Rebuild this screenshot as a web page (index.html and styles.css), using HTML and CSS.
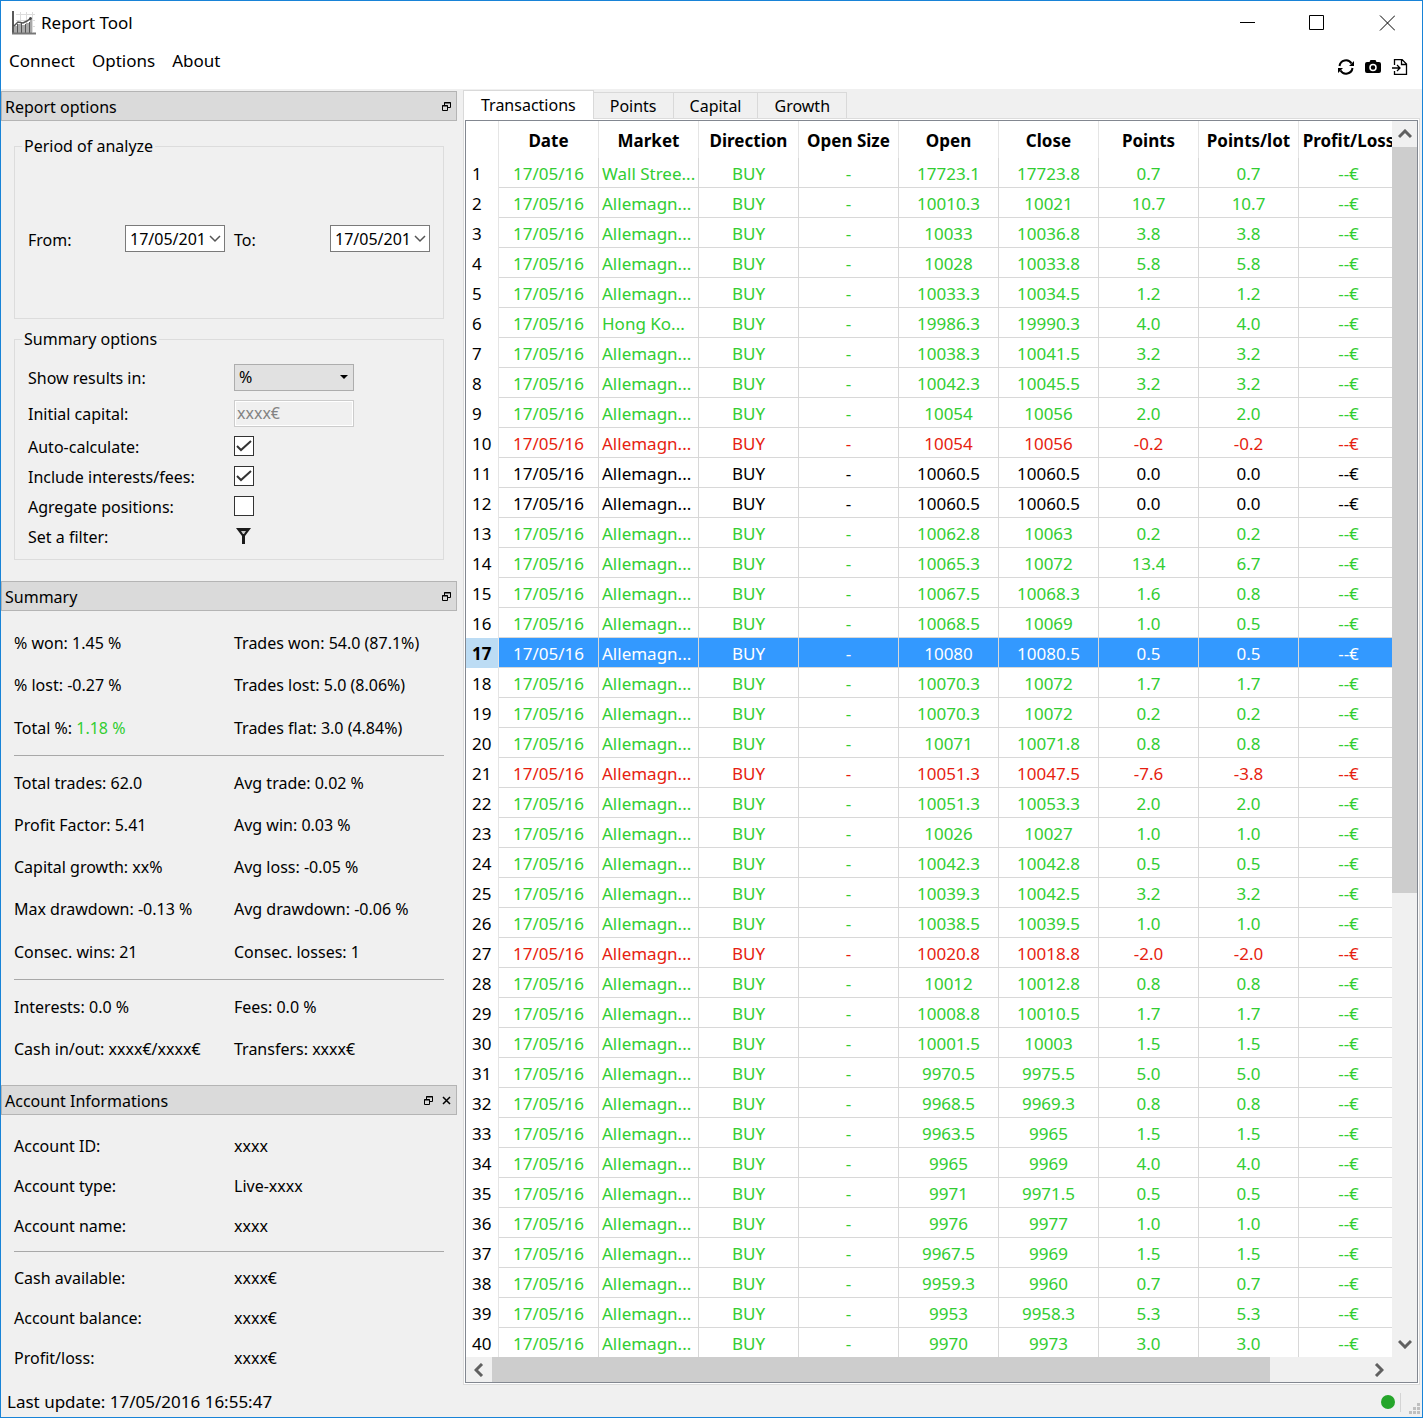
FILE: index.html
```html
<!DOCTYPE html>
<html lang="en">

<head>
    <meta charset="UTF-8">
    <meta name="viewport" content="width=device-width, initial-scale=1.0">
    <title>Report Tool</title>
    <link rel="stylesheet" href="styles.css">
</head>

<body>
    <header>
        <div class="title-bar">
            <svg class="app-icon" width="24" height="24" viewBox="0 0 24 24">
                <path d="M4 3.5h19M4 9.5h19M4 15.5h19M8.500 1v20M14.500 1v20M20.500 1v20" stroke="#dcdcdc" fill="none" />
                <path d="M2 22V15h3v7zM6 22v-9h3v9zM10 22v-8h3v8zM14 22V12h3v10zM18 22V9h2v13z" fill="#aaa" />
                <path d="M5.500 22v-9M9.500 22V12M13.500 22V13M17.500 22V11" stroke="#555" fill="none" />
                <path d="M2 15l4-4 5 1 4-2 4-3" stroke="#555" stroke-width="1.500" fill="none" />
                <circle cx="18.500" cy="7.500" r="1.500" fill="#444" />
                <path d="M1 0v23" stroke="#222" stroke-width="1.500" />
                <path d="M0 22.500h24" stroke="#777" stroke-width="2" />
            </svg>
            <h1>Report Tool</h1>
            <div class="window-buttons">
                <button type="button" aria-label="Minimize">
                    <svg width="16" height="16" viewBox="0 0 16 16"><path d="M1 7.500h15" /></svg>
                </button>
                <button type="button" aria-label="Maximize">
                    <svg width="16" height="16" viewBox="0 0 16 16"><path d="M.5.5h14v14H.5z" /></svg>
                </button>
                <button type="button" aria-label="Close">
                    <svg width="16" height="16" viewBox="0 0 16 16"><path d="M1 .5l15 15M16 .5L1 15.500" /></svg>
                </button>
            </div>
        </div>
        <div class="menu-bar">
            <nav>
                <button type="button">Connect</button>
                <button type="button">Options</button>
                <button type="button">About</button>
            </nav>
            <div class="toolbar">
                <button type="button" aria-label="Refresh">
                    <svg width="16" height="16" viewBox="0 0 16 16">
                        <path d="M1.500 7A6.500 6.500 0 0 1 13.500 4.500M14.500 9A6.500 6.500 0 0 1 2.500 11.500" stroke="#000" stroke-width="2" fill="none" />
                        <path d="M16 2v5h-5zM0 14V9h5z" />
                    </svg>
                </button>
                <button type="button" aria-label="Screenshot">
                    <svg width="16" height="16" viewBox="0 0 16 16">
                        <path d="M2 3h2.500l1-2h5l1 2H14a2 2 0 0 1 2 2v7a2 2 0 0 1-2 2H2a2 2 0 0 1-2-2V5a2 2 0 0 1 2-2z" />
                        <circle cx="8" cy="8.500" r="3" fill="none" stroke="#fff" stroke-width="1.500" />
                    </svg>
                </button>
                <button type="button" aria-label="Export">
                    <svg width="16" height="16" viewBox="0 0 16 16">
                        <path d="M2.500 6V.5H10l4.500 4.500v10.500h-12V12M9.500 1v4.500H14M0 9h7.500M5 6l3 3-3 3" stroke="#000" stroke-width="1.300" fill="none" />
                    </svg>
                </button>
            </div>
        </div>
    </header>

    <main>
        <aside>
            <section class="dock">
                <div class="dock-title">
                    <h2>Report options</h2>
                    <button type="button" aria-label="Float"><svg width="9" height="9" viewBox="0 0 9 9"><path d="M2.500 3V.5h6v5H6M2 1h7M.5 3.500h5v5h-5zM0 4h6" /></svg></button>
                </div>
                <div class="options">
                    <fieldset class="period">
                        <legend>Period of analyze</legend>
                        <label for="from">From:</label>
                        <div class="date-box">
                            <input type="text" id="from" value="17/05/201">
                            <button type="button" aria-label="Pick start date"><svg width="12" height="8" viewBox="0 0 12 8"><path d="M1 1l5 5 5-5" /></svg></button>
                        </div>
                        <label for="to">To:</label>
                        <div class="date-box">
                            <input type="text" id="to" value="17/05/201">
                            <button type="button" aria-label="Pick end date"><svg width="12" height="8" viewBox="0 0 12 8"><path d="M1 1l5 5 5-5" /></svg></button>
                        </div>
                    </fieldset>
                    <fieldset class="summary-options">
                        <legend>Summary options</legend>
                        <label for="unit">Show results in:</label>
                        <div class="select-box">
                            <select id="unit">
                                <option>%</option>
                            </select>
                            <svg width="8" height="4" viewBox="0 0 8 4"><path d="M0 0h8L4 4z" /></svg>
                        </div>
                        <label for="capital">Initial capital:</label>
                        <input type="text" id="capital" value="xxxx€" disabled>
                        <label for="auto">Auto-calculate:</label>
                        <span class="check"><input type="checkbox" id="auto" checked><svg width="16" height="12" viewBox="0 0 16 12"><path d="M1 6l4 4L15 1" /></svg></span>
                        <label for="fees">Include interests/fees:</label>
                        <span class="check"><input type="checkbox" id="fees" checked><svg width="16" height="12" viewBox="0 0 16 12"><path d="M1 6l4 4L15 1" /></svg></span>
                        <label for="agregate">Agregate positions:</label>
                        <span class="check"><input type="checkbox" id="agregate"></span>
                        <label for="filter">Set a filter:</label>
                        <button type="button" id="filter" aria-label="Set a filter">
                            <svg width="15" height="16" viewBox="0 0 15 16"><path d="M0 0h15L9 8v8H6V8z" fill="#1a1a1a" /><path d="M5 3h5L8 6H7z" fill="#ccc" /></svg>
                        </button>
                    </fieldset>
                </div>
            </section>

            <section class="dock grow">
                <div class="dock-title">
                    <h2>Summary</h2>
                    <button type="button" aria-label="Float"><svg width="9" height="9" viewBox="0 0 9 9"><path d="M2.500 3V.5h6v5H6M2 1h7M.5 3.500h5v5h-5zM0 4h6" /></svg></button>
                </div>
                <div class="summary">
                    <div class="row"><span>% won: 1.45 %</span><span>Trades won: 54.0 (87.1%)</span></div>
                    <div class="row"><span>% lost: -0.27 %</span><span>Trades lost: 5.0 (8.06%)</span></div>
                    <div class="row"><span>Total %: <span class="win">1.18 %</span></span><span>Trades flat: 3.0 (4.84%)</span></div>
                    <hr>
                    <div class="row"><span>Total trades: 62.0</span><span>Avg trade: 0.02 %</span></div>
                    <div class="row"><span>Profit Factor: 5.41</span><span>Avg win: 0.03 %</span></div>
                    <div class="row"><span>Capital growth: xx%</span><span>Avg loss: -0.05 %</span></div>
                    <div class="row"><span>Max drawdown: -0.13 %</span><span>Avg drawdown: -0.06 %</span></div>
                    <div class="row"><span>Consec. wins: 21</span><span>Consec. losses: 1</span></div>
                    <hr>
                    <div class="row"><span>Interests: 0.0 %</span><span>Fees: 0.0 %</span></div>
                    <div class="row"><span>Cash in/out: xxxx€/xxxx€</span><span>Transfers: xxxx€</span></div>
                </div>
            </section>

            <section class="dock">
                <div class="dock-title">
                    <h2>Account Informations</h2>
                    <button type="button" aria-label="Float"><svg width="9" height="9" viewBox="0 0 9 9"><path d="M2.500 3V.5h6v5H6M2 1h7M.5 3.500h5v5h-5zM0 4h6" /></svg></button>
                    <button type="button" aria-label="Close"><svg class="cross" width="9" height="9" viewBox="0 0 9 9"><path d="M1 1l7 7M8 1L1 8" /></svg></button>
                </div>
                <div class="account">
                    <div class="row"><span>Account ID:</span><span>xxxx</span></div>
                    <div class="row"><span>Account type:</span><span>Live-xxxx</span></div>
                    <div class="row"><span>Account name:</span><span>xxxx</span></div>
                    <hr>
                    <div class="row"><span>Cash available:</span><span>xxxx€</span></div>
                    <div class="row"><span>Account balance:</span><span>xxxx€</span></div>
                    <div class="row"><span>Profit/loss:</span><span>xxxx€</span></div>
                </div>
            </section>
        </aside>

        <section class="report">
            <div class="tabs" role="tablist">
                <button type="button" role="tab" class="active">Transactions</button>
                <button type="button" role="tab">Points</button>
                <button type="button" role="tab">Capital</button>
                <button type="button" role="tab">Growth</button>
            </div>
            <div class="pane">
                <div class="table-frame">
                    <div class="table-view">
                        <table>
                            <thead>
                                <tr>
                                    <th></th>
                                    <th>Date</th>
                                    <th>Market</th>
                                    <th>Direction</th>
                                    <th>Open Size</th>
                                    <th>Open</th>
                                    <th>Close</th>
                                    <th>Points</th>
                                    <th>Points/lot</th>
                                    <th>Profit/Loss</th>
                                </tr>
                            </thead>
                            <tbody id="transactions"></tbody>
                        </table>
                    </div>
                    <div class="scroll vertical">
                        <button type="button" aria-label="Scroll up"><svg width="14" height="10" viewBox="0 0 14 10"><path d="M1 8l6-6 6 6" /></svg></button>
                        <div class="track"><div class="thumb"></div></div>
                        <button type="button" aria-label="Scroll down"><svg width="14" height="10" viewBox="0 0 14 10"><path d="M1 2l6 6 6-6" /></svg></button>
                    </div>
                    <div class="scroll horizontal">
                        <button type="button" aria-label="Scroll left"><svg width="10" height="14" viewBox="0 0 10 14"><path d="M8 1L2 7l6 6" /></svg></button>
                        <div class="track"><div class="thumb"></div></div>
                        <button type="button" aria-label="Scroll right"><svg width="10" height="14" viewBox="0 0 10 14"><path d="M2 1l6 6-6 6" /></svg></button>
                    </div>
                </div>
            </div>
        </section>
    </main>

    <footer>
        <p>Last update: 17/05/2016 16:55:47</p>
        <span class="status-dot"></span>
        <span class="separator"></span>
        <svg width="11" height="11" viewBox="0 0 11 11">
            <path d="M8 0h3v3H8zM4 4h3v3H4zM8 4h3v3H8zM0 8h3v3H0zM4 8h3v3H4zM8 8h3v3H8z" fill="#bfbfbf" />
        </svg>
    </footer>

    <script>
        const selectedRow = 17;

        // market, open, close, points, points per lot
        const trades = [
            ["Wall Stree...", "17723.1", "17723.8", "0.7", "0.7"],
            ["Allemagn...", "10010.3", "10021", "10.7", "10.7"],
            ["Allemagn...", "10033", "10036.8", "3.8", "3.8"],
            ["Allemagn...", "10028", "10033.8", "5.8", "5.8"],
            ["Allemagn...", "10033.3", "10034.5", "1.2", "1.2"],
            ["Hong Ko...", "19986.3", "19990.3", "4.0", "4.0"],
            ["Allemagn...", "10038.3", "10041.5", "3.2", "3.2"],
            ["Allemagn...", "10042.3", "10045.5", "3.2", "3.2"],
            ["Allemagn...", "10054", "10056", "2.0", "2.0"],
            ["Allemagn...", "10054", "10056", "-0.2", "-0.2"],
            ["Allemagn...", "10060.5", "10060.5", "0.0", "0.0"],
            ["Allemagn...", "10060.5", "10060.5", "0.0", "0.0"],
            ["Allemagn...", "10062.8", "10063", "0.2", "0.2"],
            ["Allemagn...", "10065.3", "10072", "13.4", "6.7"],
            ["Allemagn...", "10067.5", "10068.3", "1.6", "0.8"],
            ["Allemagn...", "10068.5", "10069", "1.0", "0.5"],
            ["Allemagn...", "10080", "10080.5", "0.5", "0.5"],
            ["Allemagn...", "10070.3", "10072", "1.7", "1.7"],
            ["Allemagn...", "10070.3", "10072", "0.2", "0.2"],
            ["Allemagn...", "10071", "10071.8", "0.8", "0.8"],
            ["Allemagn...", "10051.3", "10047.5", "-7.6", "-3.8"],
            ["Allemagn...", "10051.3", "10053.3", "2.0", "2.0"],
            ["Allemagn...", "10026", "10027", "1.0", "1.0"],
            ["Allemagn...", "10042.3", "10042.8", "0.5", "0.5"],
            ["Allemagn...", "10039.3", "10042.5", "3.2", "3.2"],
            ["Allemagn...", "10038.5", "10039.5", "1.0", "1.0"],
            ["Allemagn...", "10020.8", "10018.8", "-2.0", "-2.0"],
            ["Allemagn...", "10012", "10012.8", "0.8", "0.8"],
            ["Allemagn...", "10008.8", "10010.5", "1.7", "1.7"],
            ["Allemagn...", "10001.5", "10003", "1.5", "1.5"],
            ["Allemagn...", "9970.5", "9975.5", "5.0", "5.0"],
            ["Allemagn...", "9968.5", "9969.3", "0.8", "0.8"],
            ["Allemagn...", "9963.5", "9965", "1.5", "1.5"],
            ["Allemagn...", "9965", "9969", "4.0", "4.0"],
            ["Allemagn...", "9971", "9971.5", "0.5", "0.5"],
            ["Allemagn...", "9976", "9977", "1.0", "1.0"],
            ["Allemagn...", "9967.5", "9969", "1.5", "1.5"],
            ["Allemagn...", "9959.3", "9960", "0.7", "0.7"],
            ["Allemagn...", "9953", "9958.3", "5.3", "5.3"],
            ["Allemagn...", "9970", "9973", "3.0", "3.0"]
        ];

        const tbody = document.getElementById("transactions");

        trades.forEach(function (trade, index) {
            const [market, open, close, points, perLot] = trade;
            const row = document.createElement("tr");

            if (index + 1 === selectedRow) {
                row.className = "selected";
            } else if (Number(points) > 0) {
                row.className = "win";
            } else if (Number(points) < 0) {
                row.className = "loss";
            }

            const head = document.createElement("th");
            head.innerText = index + 1;
            row.appendChild(head);

            ["17/05/16", market, "BUY", "-", open, close, points, perLot, "--€"].forEach(function (value) {
                const cell = document.createElement("td");
                cell.innerText = value;
                row.appendChild(cell);
            });
            row.children[2].className = "market";
            tbody.appendChild(row);
        });
    </script>
</body>

</html>
```
FILE: styles.css
```css
* {
    box-sizing: border-box;
}

body {
    margin: 0;
    height: 100vh;
    display: flex;
    flex-direction: column;
    border: 1px solid #1883d7;
    background-color: #f0f0f0;
    color: #000;
    font-family: "Noto Sans", "Open Sans", sans-serif;
    font-size: 16px;
    line-height: 20px;
    overflow: hidden;
}

button,
input,
select {
    font: inherit;
    color: inherit;
    margin: 0;
    padding: 0;
    border: none;
    border-radius: 0;
    background: none;
}

h1,
h2,
p {
    margin: 0;
    font-size: inherit;
    font-weight: normal;
}

svg {
    display: block;
}

/* title bar and menus */
header {
    background-color: #fff;
    font-size: 17px;
}

.title-bar {
    display: flex;
    align-items: center;
    height: 44px;
    padding-left: 11px;
    gap: 5px;
}

.window-buttons {
    display: flex;
    margin-left: auto;
}

.window-buttons button {
    display: flex;
    justify-content: center;
    width: 70px;
}

.window-buttons path {
    stroke: #000;
    fill: none;
}

.menu-bar {
    display: flex;
    justify-content: space-between;
    height: 44px;
    padding: 0 14px 0 8px;
}

nav {
    display: flex;
    gap: 17px;
    height: 32px;
}

.toolbar {
    display: flex;
    align-items: center;
    gap: 11px;
}

main {
    flex: 1;
    min-height: 0;
    display: flex;
    gap: 6px;
}

/* left docks */
aside {
    flex: 0 0 456px;
    display: flex;
    flex-direction: column;
    padding-top: 2px;
    padding-bottom: 9px;
}

.dock {
    display: flex;
    flex-direction: column;
}

.grow {
    flex: 1;
}

.dock-title {
    display: flex;
    align-items: center;
    gap: 9px;
    height: 30px;
    padding: 1px 5px 0 3px;
    border: 1px solid #b4b4b4;
    background-color: #dadada;
}

.dock-title h2 {
    flex: 1;
}

.dock-title path {
    stroke: #000;
    fill: none;
}

.dock-title .cross {
    stroke-width: 1.5;
}

.options {
    display: flex;
    flex-direction: column;
    gap: 10px;
    padding: 15px 13px 21px;
}

fieldset {
    margin: 0;
    padding: 0 13px;
    border: 1px solid #dcdcdc;
}

legend {
    margin-left: -6px;
    padding: 0 2px;
}

label {
    padding-top: 2px;
}

.period {
    display: grid;
    grid-template-columns: 97px 1fr 96px 100px;
    grid-template-rows: 159px;
    align-items: center;
    padding-top: 3px;
}

.date-box {
    display: flex;
    width: 100px;
    height: 27px;
    border: 1px solid #7a7a7a;
    background-color: #fff;
}

.date-box input {
    width: 80px;
    padding-left: 4px;
}

.date-box button {
    display: flex;
    align-items: center;
    justify-content: center;
    width: 18px;
}

.date-box path {
    stroke: #555;
    stroke-width: 1.5;
    fill: none;
}

.summary-options {
    display: grid;
    grid-template-columns: 206px 120px;
    grid-template-rows: 36px 36px repeat(4, 30px);
    align-items: center;
    padding-top: 10px;
    padding-bottom: 8px;
}

.select-box {
    position: relative;
}

.select-box svg {
    position: absolute;
    right: 6px;
    top: 11px;
}

select {
    appearance: none;
    display: block;
    width: 100%;
    height: 27px;
    padding-left: 4px;
    border: 1px solid #adadad;
    background-color: #e1e1e1;
}

#capital {
    width: 100%;
    height: 27px;
    padding-left: 2px;
    border: 1px solid #ccc;
    outline: 1px solid #fff;
    outline-offset: -2px;
    background-color: #f0f0f0;
    color: #838383;
}

.check {
    position: relative;
    height: 20px;
}

.check input {
    appearance: none;
    display: block;
    width: 20px;
    height: 20px;
    border: 1px solid #333;
    background-color: #fff;
}

.check svg {
    position: absolute;
    left: 2px;
    top: 4px;
    pointer-events: none;
}

.check path {
    stroke: #333;
    stroke-width: 2;
    fill: none;
}

#filter {
    width: 20px;
    padding-left: 2px;
}

.summary,
.account {
    flex: 1;
    display: flex;
    flex-direction: column;
    padding: 11px 13px 15px;
}

.account {
    padding-bottom: 0;
}

.row {
    flex: 1;
    display: grid;
    grid-template-columns: 220px 1fr;
    align-items: center;
    min-height: 40px;
    white-space: nowrap;
}

hr {
    width: 100%;
    margin: 6px 0;
    border: none;
    border-top: 1px solid #a8a8a8;
}

.account hr {
    margin: 5px 0 6px;
}

/* tabs and table */
.report {
    flex: 1;
    min-width: 0;
    display: flex;
    flex-direction: column;
    padding: 1px 2px 2px 0;
}

.tabs {
    display: flex;
    align-items: flex-end;
    height: 28px;
}

.tabs button {
    height: 26px;
    padding: 0 16px;
    border: 1px solid #d9d9d9;
    border-left: none;
    border-bottom: none;
}

.tabs .active {
    position: relative;
    height: 29px;
    margin-bottom: -1px;
    padding: 0 17px;
    border-left: 1px solid #d9d9d9;
    background-color: #fff;
}

.pane {
    flex: 1;
    min-height: 0;
    display: flex;
    padding: 1px;
    border: 1px solid #dcdcdc;
    background-color: #fff;
}

.table-frame {
    flex: 1;
    min-width: 0;
    display: grid;
    grid-template-columns: minmax(0, 1fr) 25px;
    grid-template-rows: minmax(0, 1fr) 25px;
    border: 1px solid #828790;
    background-color: #f0f0f0;
}

.table-view {
    overflow: hidden;
    background-color: #fff;
}

table {
    width: 933px;
    table-layout: fixed;
    border-collapse: separate;
    border-spacing: 0;
    font-size: 17px;
}

th,
td {
    height: 30px;
    padding: 2px 0 0;
    border-right: 1px solid #d8d8d8;
    border-bottom: 1px solid #d8d8d8;
    text-align: center;
    white-space: nowrap;
}

thead th {
    height: 37px;
    border-right-color: #e5e5e5;
    border-bottom: none;
}

thead th:first-child {
    width: 33px;
}

tbody th {
    padding-left: 6px;
    border-right-color: #e5e5e5;
    border-bottom: none;
    font-weight: normal;
    text-align: left;
}

.market {
    padding-left: 3px;
    text-align: left;
}

.win {
    color: #32cd32;
}

.loss {
    color: #e61e10;
}

.win th,
.loss th {
    color: #000;
}

.selected td {
    background-color: #3399ff;
    color: #fff;
}

.selected th {
    background-color: #bcdcf4;
    font-weight: bold;
}

.scroll {
    display: flex;
}

.vertical {
    flex-direction: column;
}

.scroll button {
    display: flex;
    align-items: center;
    justify-content: center;
    flex: 0 0 26px;
}

.scroll path {
    stroke: #606060;
    stroke-width: 3;
    fill: none;
}

.track {
    flex: 1;
}

.thumb {
    background-color: #cdcdcd;
}

.vertical .thumb {
    height: 63%;
}

.horizontal .thumb {
    width: 89%;
    height: 100%;
}

/* status bar */
footer {
    display: flex;
    align-items: center;
    height: 30px;
    padding: 0 2px 0 6px;
    font-size: 17px;
}

footer p {
    flex: 1;
}

.status-dot {
    width: 14px;
    height: 14px;
    margin-right: 5px;
    border-radius: 50%;
    background-color: #25a52a;
}

.separator {
    width: 1px;
    height: 19px;
    margin-right: 8px;
    background-color: #d4d4d4;
}

footer svg {
    align-self: flex-end;
    margin-bottom: 3px;
}
```
